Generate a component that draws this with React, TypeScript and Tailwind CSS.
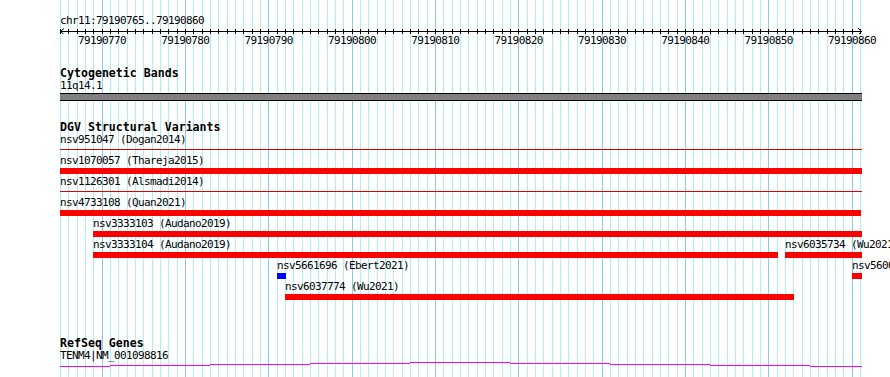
const START = 79190765;
const SCALE = 800 / 96;
const gx = (k: number) => Math.round(60 + k * SCALE);

type Feature = { label: string; x1: number; x2: number; kind?: "thin" | "blue" };

const dgvRows: Feature[][] = [
  [{ label: "nsv951047 (Dogan2014)", x1: 60, x2: 862, kind: "thin" }],
  [{ label: "nsv1070057 (Thareja2015)", x1: 60, x2: 862 }],
  [{ label: "nsv1126301 (Alsmadi2014)", x1: 60, x2: 862, kind: "thin" }],
  [{ label: "nsv4733108 (Quan2021)", x1: 60, x2: 861 }],
  [{ label: "nsv3333103 (Audano2019)", x1: 93, x2: 862 }],
  [
    { label: "nsv3333104 (Audano2019)", x1: 93, x2: 778 },
    { label: "nsv6035734 (Wu2021)", x1: 785, x2: 862 },
  ],
  [
    { label: "nsv5661696 (Ebert2021)", x1: 277, x2: 286, kind: "blue" },
    { label: "nsv5600850 (Ebert2021)", x1: 852, x2: 862 },
  ],
  [{ label: "nsv6037774 (Wu2021)", x1: 285, x2: 794 }],
];

// gene line steps (x from, x to, y inside the svg)
const geneSteps = [
  [60, 110, 4],
  [110, 210, 3],
  [210, 310, 2],
  [310, 410, 1],
  [410, 510, 0],
  [510, 610, 1],
  [610, 710, 2],
  [710, 810, 3],
  [810, 862, 4],
];

const txt = "text-[11px] tracking-[-0.62px] h-[12px] leading-[12px] whitespace-nowrap";
const title = "text-[11.6px] font-bold h-[13px] leading-[13px] whitespace-nowrap pl-[60px]";

function Grid() {
  const ks = Array.from({ length: 97 }, (_, k) => k);
  return (
    <svg className="absolute inset-0" width={890} height={377} shapeRendering="crispEdges">
      {ks.map((k) => (
        <line
          key={k}
          x1={gx(k) + 0.5}
          x2={gx(k) + 0.5}
          y1={0}
          y2={377}
          stroke={k % 10 === 5 ? "#87ceeb" : "#afeeee"}
        />
      ))}
    </svg>
  );
}

function Ruler() {
  const ks = Array.from({ length: 97 }, (_, k) => k);
  const majors = Array.from({ length: 10 }, (_, j) => 5 + j * 10);
  return (
    <div>
      <div className={`${txt} pl-[60px]`}>chr11:79190765..79190860</div>
      <svg width={890} height={7} className="block" shapeRendering="crispEdges">
        <line x1={60} x2={862} y1={4.5} y2={4.5} stroke="#000" />
        {ks.map((k) => (
          <line key={k} x1={gx(k) + 0.5} x2={gx(k) + 0.5} y1={2} y2={7} stroke="#000" />
        ))}
        <polyline points="64,1.5 60.5,4.5 64,7.5" fill="none" stroke="#000" shapeRendering="auto" />
        <polyline points="858,1 861.5,4.5 858,8" fill="none" stroke="#000" shapeRendering="auto" />
      </svg>
      <div className="relative h-[13px]">
        {majors.map((k) => (
          <span
            key={k}
            className="absolute top-0 -translate-x-1/2 text-[11px] tracking-[-0.62px] leading-[13px] pl-[0.62px]"
            style={{ left: 60 + k * SCALE }}
          >
            {START + k}
          </span>
        ))}
      </div>
    </div>
  );
}

function DgvRow({ row }: { row: Feature[] }) {
  return (
    <div className="relative h-[21px]">
      {row.map((f) => (
        <div
          key={f.label}
          className="absolute top-0 flex flex-col"
          style={{ left: f.x1, width: f.x2 - f.x1 }}
        >
          <span className={txt}>{f.label}</span>
          {f.kind === "thin" ? (
            <div className="mt-[3px] h-px bg-[#e00000]" />
          ) : (
            <div className={`mt-px h-[6px] ${f.kind === "blue" ? "bg-[#0000ff]" : "bg-[#ff0000]"}`} />
          )}
        </div>
      ))}
    </div>
  );
}

export default function App() {
  return (
    <div className="relative w-[890px] h-[377px] overflow-hidden bg-white text-black font-['DejaVu_Sans_Mono',monospace]">
      <Grid />
      <div className="relative flex flex-col pt-[15px]">
        <Ruler />

        {/* Cytogenetic Bands */}
        <div className={`${title} mt-[20px]`}>Cytogenetic Bands</div>
        <div className={`${txt} pl-[60px]`}>11q14.1</div>
        <div className="ml-[60px] mt-px w-[802px] h-[8px] border-y border-black bg-[#808080]" />

        {/* DGV Structural Variants */}
        <div className={`${title} mt-[20px]`}>DGV Structural Variants</div>
        {dgvRows.map((row, i) => (
          <DgvRow key={i} row={row} />
        ))}

        {/* RefSeq Genes */}
        <div className={`${title} mt-[35px]`}>RefSeq Genes</div>
        <div className={`${txt} pl-[60px]`}>TENM4|NM_001098816</div>
        <svg width={890} height={6} className="block" shapeRendering="crispEdges">
          {geneSteps.map(([a, b, y]) => (
            <rect key={a} x={a} y={y} width={b - a} height={1} fill="#ff00ff" />
          ))}
        </svg>
      </div>
    </div>
  );
}
